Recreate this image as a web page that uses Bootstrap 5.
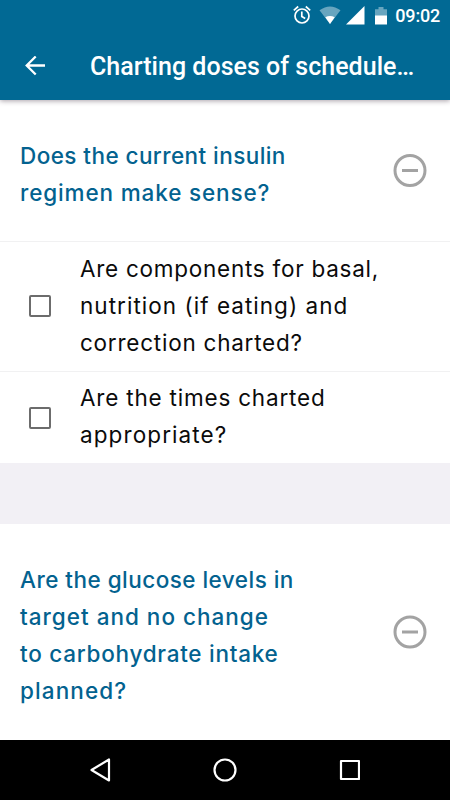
<!DOCTYPE html>
<html lang="en">
<head>
<meta charset="utf-8">
<meta name="viewport" content="width=device-width, initial-scale=1">
<title>Charting doses of scheduled insulin</title>
<link href="https://cdn.jsdelivr.net/npm/bootstrap@5.3.0/dist/css/bootstrap.min.css" rel="stylesheet">
<style>
body{height:800px;font-family:Inter,"Open Sans",sans-serif;color:#0b0b0b;background:#fff}
svg{display:block;flex:none}
.top{background:#016994;color:#fff;font-family:Roboto,sans-serif;height:100px;box-shadow:0 1px 5px rgba(40,20,40,.4);z-index:2}
.status{height:32px;padding-right:10px}
.clock{font-size:18px;font-weight:500;line-height:32px;margin-left:8px;letter-spacing:-.2px}
.appbar{height:68px;padding-left:25px}
.title{font-size:25px;font-weight:500;line-height:32px;margin:2px 0 0 45px;letter-spacing:.02px}
.question{color:#03628f;font-size:22.5px;font-weight:500;line-height:37px;padding:0 23px 0 20px}
.q1{height:142px;border-bottom:1px solid #f1f1f2!important}
.q2{height:216px}
.question-text{padding-top:6px}
.line{display:block;white-space:nowrap}
.l1{letter-spacing:.43px}
.l2{letter-spacing:.86px}
.l3{letter-spacing:.74px}
.l4{letter-spacing:1.03px}
.l5{letter-spacing:.76px}
.l6{letter-spacing:.8px}
.l7{letter-spacing:1.1px}
.l8{letter-spacing:.47px}
.l9{letter-spacing:1px}
.l10{letter-spacing:.74px}
.l11{letter-spacing:1.1px}
.item{font-size:22.5px;line-height:37px;padding:0 20px 0 29px;color:#0b0b0b}
.i1{height:130px;border-bottom:1px solid #f1f1f2!important}
.i2{height:91px}
.item-text{margin-top:-3px}
.item .box{width:22px;height:22px;border:2px solid #6c6c6c;border-radius:2px;margin:0 29px 0 0;background:#fff}
.i1 .box{margin-top:-1px}
.gap-band{height:61px;background:#f2f0f5}
.sysnav{height:60px;background:#000}
</style>
<script src="https://cdn.jsdelivr.net/npm/bootstrap@5.3.0/dist/js/bootstrap.bundle.min.js"></script>
</head>
<body class="d-flex flex-column overflow-hidden">
<header class="top position-relative flex-shrink-0">
  <div class="status d-flex align-items-center justify-content-end">
    <svg width="82" height="24" viewBox="0 0 82 24" fill="none">
      <g stroke="#fff" stroke-width="1.7"><circle cx="9" cy="12" r="7"/><path d="M.8 6.300l4.400-3.800M17.200 6.300l-4.400-3.800M8.800 7.500v5l3.400 2"/></g>
      <path d="M26.500 6.300Q37-1.300 47.500 6.300L37 20z" fill="#67a5bf"/>
      <path d="M32.300 13.300q4.700-2.600 9.400 0L37 20z" fill="#fff"/>
      <path d="M53 20.500L71.500 2v18.500z" fill="#fff"/>
    </svg>
    <svg width="12" height="20" viewBox="0 0 12 20"><path d="M0 3.200h3.500V1h5v2.200H12V10H0z" fill="#67a5bf"/><path d="M0 9.500h12v9H0z" fill="#fff"/></svg>
    <span class="clock">09:02</span>
  </div>
  <nav class="appbar d-flex align-items-center" aria-label="App bar">
    <svg width="20" height="20" viewBox="0 0 20 20" fill="none" stroke="#fff" stroke-width="2.300"><path d="M20 9.500H2M10.700 .5L1.700 9.500l9 9"/></svg>
    <span class="title text-nowrap">Charting doses of schedule…</span>
  </nav>
</header>
<main class="flex-shrink-0">
  <section>
    <div class="question q1 d-flex align-items-center justify-content-between">
      <div class="question-text"><span class="line l1">Does the current insulin</span><span class="line l2">regimen make sense?</span></div>
      <svg width="34" height="34" viewBox="0 0 34 34" fill="none" stroke="#a3a3a3" stroke-width="3"><circle cx="17" cy="16.500" r="15"/><path d="M9 16.500h16"/></svg>
    </div>
    <div class="list-group list-group-flush rounded-0">
      <label class="item i1 d-flex align-items-center"><input class="box form-check-input flex-shrink-0" type="checkbox"><span class="item-text"><span class="line l3">Are components for basal,</span><span class="line l4">nutrition (if eating) and</span><span class="line l5">correction charted?</span></span></label>
      <label class="item i2 d-flex align-items-center"><input class="box form-check-input flex-shrink-0" type="checkbox"><span class="item-text"><span class="line l6">Are the times charted</span><span class="line l7">appropriate?</span></span></label>
    </div>
  </section>
  <div class="gap-band"></div>
  <section class="question q2 d-flex align-items-center justify-content-between">
    <div class="question-text"><span class="line l8">Are the glucose levels in</span><span class="line l9">target and no change</span><span class="line l10">to carbohydrate intake</span><span class="line l11">planned?</span></div>
    <svg width="34" height="34" viewBox="0 0 34 34" fill="none" stroke="#a3a3a3" stroke-width="3"><circle cx="17" cy="17" r="15"/><path d="M9 17h16"/></svg>
  </section>
</main>
<footer class="sysnav flex-shrink-0 d-flex align-items-center justify-content-center">
  <svg width="270" height="30" viewBox="0 0 270 30" fill="none" stroke="#fff" stroke-width="2.200" stroke-linejoin="round"><path d="M19 4.500v21L1.500 15z"/><circle cx="135" cy="15" r="10.500"/><path d="M251 6h18v18h-18z"/></svg>
</footer>
</body>
</html>
